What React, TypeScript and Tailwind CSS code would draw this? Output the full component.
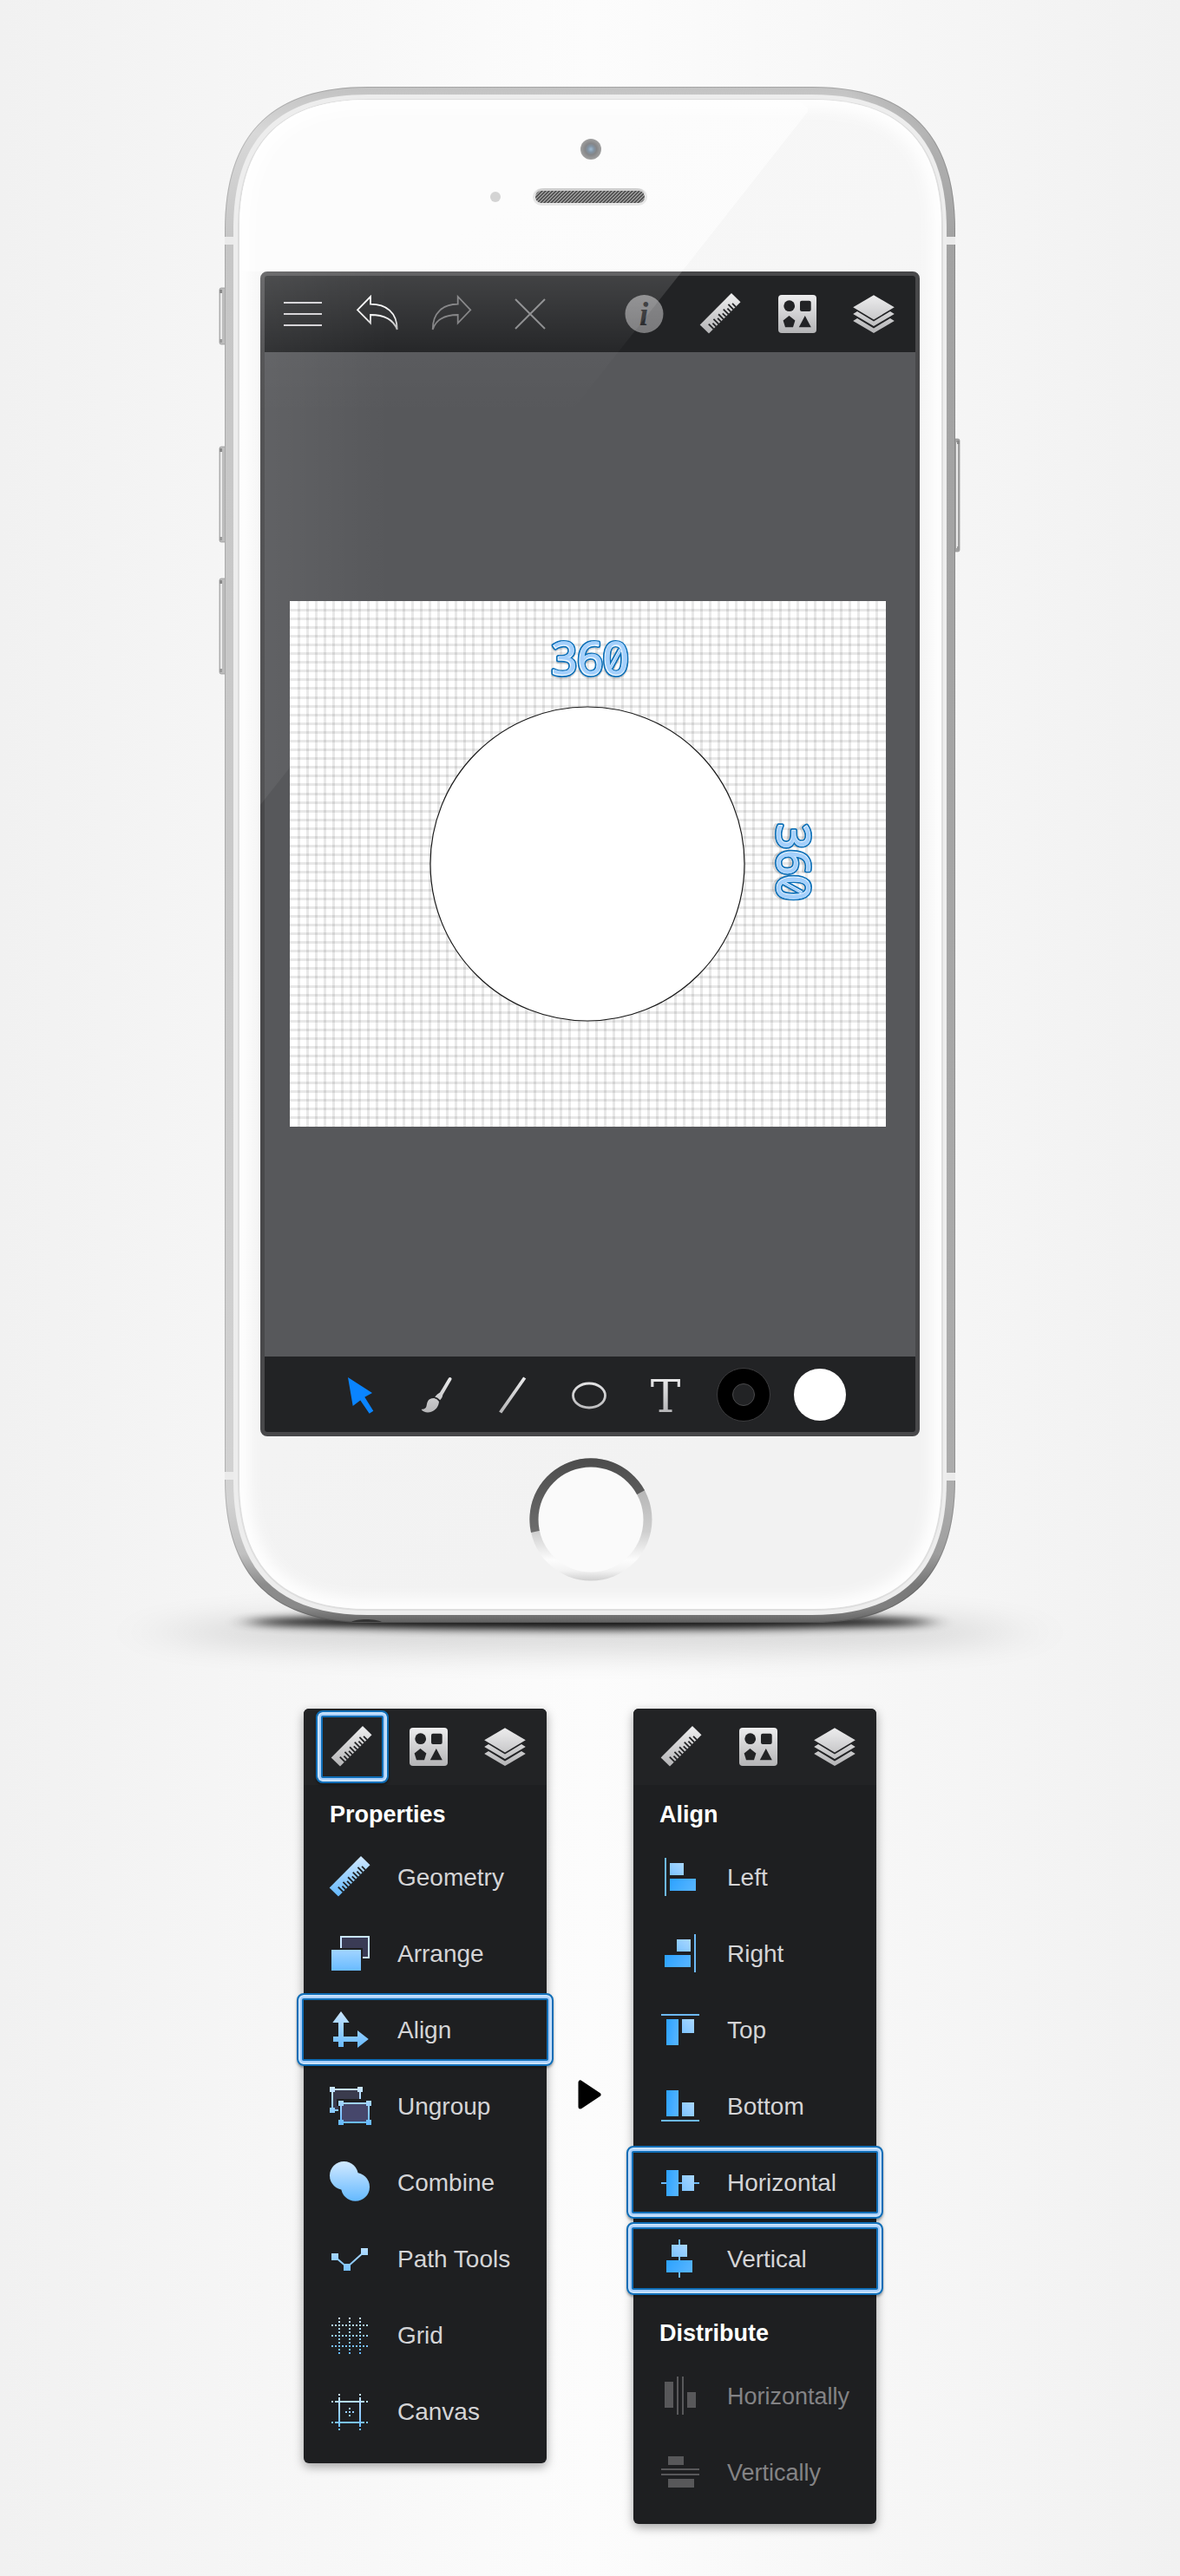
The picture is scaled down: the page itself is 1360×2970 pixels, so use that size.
import type { ReactNode } from "react";

const PHONE_W = 842;
const PHONE_H = 1771;

/* Outline of the handset: corners ease in longer than a circular arc. */
function shell(left: number, top: number, right: number, bottom: number, r: number) {
  const k = Math.round(r * 0.33);
  return [
    `M${left} ${top + r}`,
    `C${left} ${top + k} ${left + k} ${top} ${left + r} ${top}`,
    `H${right - r}`,
    `C${right - k} ${top} ${right} ${top + k} ${right} ${top + r}`,
    `V${bottom - r}`,
    `C${right} ${bottom - k} ${right - k} ${bottom} ${right - r} ${bottom}`,
    `H${left + r}`,
    `C${left + k} ${bottom} ${left} ${bottom - k} ${left} ${bottom - r}`,
    "Z",
  ].join(" ");
}

function SideKey({ x, y, height, flip = false }: { x: number; y: number; height: number; flip?: boolean }) {
  return (
    <g>
      <rect x={x} y={y} width="8" height={height} rx="2" fill={flip ? "#a2a2a2" : "#bdbdbd"} stroke="#909090" strokeWidth="0.7" />
      <rect x={flip ? x + 4 : x + 1} y={y + 4} width="2" height={height - 8} fill="#e9e9e9" />
      <rect x={flip ? x + 5 : x} y={y + 2} width="3" height="4" fill="#8a8a8a" />
      <rect x={flip ? x + 5 : x} y={y + height - 6} width="3" height="4" fill="#9a9a9a" />
    </g>
  );
}

function PhoneBody() {
  return (
    <svg
      className="pointer-events-none absolute inset-0 h-full w-full overflow-visible"
      viewBox={`0 0 ${PHONE_W} ${PHONE_H}`}
      aria-hidden="true"
    >
      <defs>
        <linearGradient id="rimV" x1="0" y1="0" x2="0" y2="1">
          <stop offset="0" stopColor="#c2c2c2" />
          <stop offset="0.03" stopColor="#d8d8d8" />
          <stop offset="0.1" stopColor="#c6c6c6" />
          <stop offset="0.5" stopColor="#c9c9c9" />
          <stop offset="0.92" stopColor="#d2d2d2" />
          <stop offset="0.955" stopColor="#c0c0c0" />
          <stop offset="0.975" stopColor="#8c8c8c" />
          <stop offset="0.99" stopColor="#8a8a8a" />
          <stop offset="1" stopColor="#606060" />
        </linearGradient>
        <linearGradient id="rimH" x1="0" y1="0" x2="1" y2="0">
          <stop offset="0.85" stopColor="#000" stopOpacity="0" />
          <stop offset="0.97" stopColor="#000" stopOpacity="0.18" />
          <stop offset="1" stopColor="#000" stopOpacity="0.18" />
        </linearGradient>
        <linearGradient id="face" x1="0" y1="0" x2="0.3" y2="1">
          <stop offset="0" stopColor="#f8f8f8" />
          <stop offset="1" stopColor="#f2f2f2" />
        </linearGradient>
        <radialGradient id="lens">
          <stop offset="0" stopColor="#9db9d0" />
          <stop offset="0.3" stopColor="#8293a3" />
          <stop offset="0.55" stopColor="#858688" />
          <stop offset="1" stopColor="#a0a0a0" />
        </radialGradient>
        <pattern id="mesh" width="4" height="4" patternUnits="userSpaceOnUse">
          <rect width="4" height="4" fill="#4c4c4c" />
          <path d="M-1 1L1 -1M0 4L4 0M3 5L5 3" stroke="#b4b4b4" strokeWidth="1.1" />
        </pattern>
        <filter id="softFace" x="-5%" y="-5%" width="110%" height="110%">
          <feGaussianBlur stdDeviation="8" />
        </filter>
        <filter id="shadowNear" x="-20%" y="-300%" width="140%" height="700%">
          <feGaussianBlur stdDeviation="14 5" />
        </filter>
        <filter id="shadowFar" x="-30%" y="-300%" width="160%" height="700%">
          <feGaussianBlur stdDeviation="44 16" />
        </filter>
        <clipPath id="faceClip">
          <path d={shell(17, 15, 826, 1755, 148)} />
        </clipPath>
      </defs>

      <ellipse cx="421" cy="1782" rx="490" ry="26" fill="#000" opacity="0.12" filter="url(#shadowFar)" />
      <ellipse cx="421" cy="1770" rx="396" ry="9" fill="#000" opacity="0.9" filter="url(#shadowNear)" />

      <SideKey x={-6} y={232} height={65} />
      <SideKey x={-6} y={415} height={110} />
      <SideKey x={-6} y={567} height={110} />
      <SideKey x={839} y={406} height={130} flip />

      <path d={shell(0, 0, PHONE_W, PHONE_H, 165)} fill="url(#rimV)" />
      <path d={shell(0, 0, PHONE_W, PHONE_H, 165)} fill="url(#rimH)" />
      <path d={shell(0.5, 0.5, PHONE_W - 0.5, PHONE_H - 0.5, 165)} fill="none" stroke="#000" strokeOpacity="0.15" />
      <rect x="0" y="173" width="10" height="9" fill="#ebebeb" />
      <rect x="832" y="173" width="10" height="9" fill="#ebebeb" />
      <rect x="0" y="1597" width="10" height="9" fill="#ebebeb" />
      <rect x="832" y="1598" width="10" height="9" fill="#ebebeb" />
      <path d="M146 1770C152 1766 173 1766 181 1770Z" fill="#333" />

      <path d={shell(10, 9, 832, 1762, 155)} fill="#ededed" />
      <path d={shell(15, 14, 828, 1757, 150)} fill="#dedede" />
      <path d={shell(17, 15, 826, 1755, 148)} fill="url(#face)" />
      <g clipPath="url(#faceClip)">
        <path d="M17 15H655Q676 22 671 30L527 213H17Z" fill="#fff" opacity="0.6" />
        <path d={shell(17, 15, 826, 1755, 148)} fill="none" stroke="#fff" strokeWidth="22" filter="url(#softFace)" />
      </g>

      <circle cx="422" cy="72" r="12" fill="url(#lens)" />
      <circle cx="312" cy="127" r="6" fill="#d4d4d4" />
      <rect x="355" y="117" width="132" height="20" rx="10" fill="#e6e6e6" />
      <path d="M358 123Q360 117 368 117H474Q482 117 484 123Z" fill="#cfcfcf" />
      <rect x="358" y="120" width="126" height="14" rx="7" fill="url(#mesh)" />
    </svg>
  );
}

/* Diagonal reflection that falls across the glass. */
function Glare() {
  return (
    <svg
      className="pointer-events-none absolute inset-0 h-full w-full"
      viewBox={`0 0 ${PHONE_W} ${PHONE_H}`}
      aria-hidden="true"
    >
      <defs>
        <linearGradient id="glareV" gradientUnits="userSpaceOnUse" x1="0" y1="213" x2="0" y2="380">
          <stop offset="0" stopColor="#fff" stopOpacity="0.15" />
          <stop offset="0.55" stopColor="#fff" stopOpacity="0.02" />
          <stop offset="1" stopColor="#fff" stopOpacity="0" />
        </linearGradient>
        <linearGradient id="glareH" gradientUnits="userSpaceOnUse" x1="41" y1="0" x2="190" y2="0">
          <stop offset="0" stopColor="#fff" stopOpacity="0.06" />
          <stop offset="1" stopColor="#fff" stopOpacity="0" />
        </linearGradient>
      </defs>
      <path d="M41 217Q41 213 45 213H527L41 828Z" fill="url(#glareV)" />
      <path d="M41 217Q41 213 45 213H527L41 828Z" fill="url(#glareH)" />
    </svg>
  );
}

function Icon({ children, className = "h-14 w-14" }: { children: ReactNode; className?: string }) {
  return (
    <svg viewBox="-28 -28 56 56" className={`overflow-visible ${className}`} aria-hidden="true">
      {children}
    </svg>
  );
}

/* Gradients shared by every icon on the page. */
function Paints() {
  return (
    <svg className="absolute h-0 w-0" aria-hidden="true">
      <defs>
        <linearGradient id="silver" gradientUnits="userSpaceOnUse" x1="0" y1="-22" x2="0" y2="22">
          <stop offset="0" stopColor="#ededee" />
          <stop offset="1" stopColor="#b4b4b6" />
        </linearGradient>
        <linearGradient id="grey" gradientUnits="userSpaceOnUse" x1="0" y1="-22" x2="0" y2="22">
          <stop offset="0" stopColor="#868688" />
          <stop offset="1" stopColor="#79797b" />
        </linearGradient>
        <linearGradient id="undoPaint" gradientUnits="userSpaceOnUse" x1="0" y1="-20" x2="0" y2="20">
          <stop offset="0" stopColor="#fff" />
          <stop offset="0.6" stopColor="#f0f0f0" />
          <stop offset="1" stopColor="#a8a8a8" />
        </linearGradient>
        <linearGradient id="sky" gradientUnits="userSpaceOnUse" x1="0" y1="-22" x2="0" y2="22">
          <stop offset="0" stopColor="#cde7ff" />
          <stop offset="1" stopColor="#64b9ff" />
        </linearGradient>
        <linearGradient id="pale" x1="0" y1="1" x2="1" y2="0">
          <stop offset="0" stopColor="#7cc3ff" />
          <stop offset="1" stopColor="#aad8ff" />
        </linearGradient>
        <linearGradient id="azure" x1="0" y1="0" x2="1" y2="0.3">
          <stop offset="0" stopColor="#2ba2ff" />
          <stop offset="1" stopColor="#53b3ff" />
        </linearGradient>
      </defs>
    </svg>
  );
}

const TICKS = [-19, -15, -11, -7, -3, 1, 5, 9, 13, 17];

function Ruler({ fill, hole = "#222325" }: { fill: string; hole?: string }) {
  return (
    <>
      <path d="M12 -24L22.5 -13.7L-14 22.5L-24.3 12.4Z" fill={fill} />
      <g transform="translate(-1 -0.8) rotate(-45)">
        {TICKS.map((t, i) => (
          <rect key={t} x={t} y={i % 2 === 0 ? -0.6 : 2} width="1.8" height={i % 2 === 0 ? 8.2 : 5.6} fill={hole} />
        ))}
      </g>
    </>
  );
}

function RulerIcon() {
  return (
    <Icon>
      <Ruler fill="url(#silver)" />
    </Icon>
  );
}

function ShapesIcon() {
  return (
    <Icon>
      <rect x="-22" y="-22" width="44" height="44" rx="4" fill="url(#silver)" />
      <circle cx="-9.3" cy="-9.3" r="6.4" fill="#222325" />
      <rect x="3" y="-15.3" width="12.7" height="12.3" rx="2" fill="#222325" />
      <path d="M-9.5 2L-2.6 7.4L-5 15.2H-14L-16.4 7.4Z" fill="#222325" />
      <path d="M8.8 2L15.8 15.2H1.8Z" fill="#222325" />
    </Icon>
  );
}

function LayersIcon() {
  return (
    <Icon>
      <g fill="url(#silver)">
        <path d="M0 -21.8L23.8 -7.7L0 6.4L-23.8 -7.7Z" />
        <path d="M-23.8 0L-19 -3L0 8.4L19 -3L23.8 0L0 14.1Z" />
        <path d="M-23.8 8L-19 5L0 16.4L19 5L23.8 8L0 22.1Z" />
      </g>
    </Icon>
  );
}

function ToolButton({ label, children }: { label: string; children: ReactNode }) {
  return (
    <button type="button" aria-label={label} className="flex h-full w-[88px] items-center justify-center">
      {children}
    </button>
  );
}

function TopBar() {
  return (
    <header className="flex h-[88px] justify-between bg-[#222325] pr-1">
      <div className="flex">
        <ToolButton label="Menu">
          <Icon>
            <path d="M-22 -13H22M-22 0H22M-22 13H22" stroke="#d2d0d4" strokeWidth="2" />
          </Icon>
        </ToolButton>
        <ToolButton label="Undo">
          <Icon>
            <path
              d="M-25 -4.7L-10 -20V-11.3C8 -11.3 20.7 -2 20.7 18C17 8 8 1 -10 1V10.5Z"
              fill="none"
              stroke="url(#undoPaint)"
              strokeWidth="1.8"
            />
          </Icon>
        </ToolButton>
        <ToolButton label="Redo">
          <Icon>
            <path
              d="M17.3 -4.7L2.7 -20V-11.3C-14 -11.3 -26.3 -2 -26.3 18C-23 8 -14 1 2.7 1V10.5Z"
              fill="none"
              stroke="#7c7c7e"
              strokeWidth="1.8"
            />
          </Icon>
        </ToolButton>
        <ToolButton label="Delete">
          <Icon>
            <path d="M-19 -17L15 17M15 -17L-19 17" stroke="#88888a" strokeWidth="2" />
          </Icon>
        </ToolButton>
      </div>
      <div className="flex">
        <ToolButton label="Info">
          <Icon>
            <circle cx="-0.5" r="22" fill="url(#grey)" />
            <text
              x="-1"
              y="13"
              textAnchor="middle"
              className="font-['Liberation_Serif',serif] text-[38px] font-bold italic"
              fill="#2c2d2f"
            >
              i
            </text>
          </Icon>
        </ToolButton>
        <ToolButton label="Properties">
          <RulerIcon />
        </ToolButton>
        <ToolButton label="Shapes">
          <ShapesIcon />
        </ToolButton>
        <ToolButton label="Layers">
          <LayersIcon />
        </ToolButton>
      </div>
    </header>
  );
}

function BottomBar() {
  return (
    <footer className="flex h-[87px] justify-center bg-[#222325] pl-0.5">
      <ToolButton label="Select">
        <Icon>
          <path d="M-16 -20L12 -2L3.3 2.8L13.3 18.8L8.7 21.8L-1.7 6.5L-10.3 13Z" fill="#0a84ff" />
        </Icon>
      </ToolButton>
      <ToolButton label="Brush">
        <Icon>
          <g fill="url(#silver)">
            <path d="M11.6 -18.6Q13.5 -21 15.4 -18.9Q15.8 -18 15.2 -17L5.4 0Q4.8 4 2.2 6.2Q-0.6 3 -3.8 2.4Q-1 -1 2 -2.4Z" />
            <path d="M-4.6 4C-13 4 -12.6 10 -13.6 13.6C-14.4 16.6 -17 16.8 -19.4 17C-17.4 20.6 -11.6 21 -8 19.8C-3 18.4 0.6 13.4 1 8Q-0.8 4.8 -4.6 4Z" />
          </g>
        </Icon>
      </ToolButton>
      <ToolButton label="Line">
        <Icon>
          <path d="M-16.3 20.5L11.7 -19.5" stroke="url(#silver)" strokeWidth="3.8" />
        </Icon>
      </ToolButton>
      <ToolButton label="Ellipse">
        <Icon>
          <ellipse cx="-2" cy="1" rx="18.5" ry="14" fill="none" stroke="url(#silver)" strokeWidth="2.8" />
        </Icon>
      </ToolButton>
      <ToolButton label="Text">
        <Icon>
          <text
            x="-2"
            y="20"
            textAnchor="middle"
            className="font-['DejaVu_Serif',serif] text-[52px]"
            fill="url(#silver)"
          >
            T
          </text>
        </Icon>
      </ToolButton>
      <ToolButton label="Stroke color">
        <span className="flex h-[62px] w-[62px] items-center justify-center rounded-full border border-[#3c3c3e] bg-black">
          <span className="h-[26px] w-[26px] rounded-full border border-[#4a4a4c] bg-[#222325]" />
        </span>
      </ToolButton>
      <ToolButton label="Fill color">
        <span className="h-[60px] w-[60px] rounded-full bg-white" />
      </ToolButton>
    </footer>
  );
}

/* One pass of the label: the digits plus the stroke through the zero. */
function Digits({ paint, width, y = 18.5, x = 0 }: { paint: string; width: number; x?: number; y?: number }) {
  return (
    <>
      <text x={x} y={y} fill={paint} stroke={paint} strokeWidth={width}>
        360
      </text>
      <path d={`M${23.5 + x} ${y - 7.5}L${35 + x} ${y - 28.5}`} stroke={paint} strokeWidth={width + 2} fill="none" />
    </>
  );
}

function Dimension({ transform }: { transform: string }) {
  return (
    <g
      transform={transform}
      textAnchor="middle"
      strokeLinejoin="round"
      className="font-['Open_Sans','Noto_Sans',sans-serif] text-[52px]"
    >
      <g opacity="0.14" aria-hidden="true">
        <Digits paint="#000" width={5} y={21} />
      </g>
      <Digits paint="#0b6fb8" width={5} />
      <g aria-hidden="true">
        <Digits paint="#eef7ff" width={1.6} />
        <Digits paint="#a5d0fb" width={0.4} x={0.5} y={18} />
      </g>
    </g>
  );
}

const gridLine = (i: number) => 9 + Math.floor(i * 10.09 + 0.15);

function Artboard() {
  return (
    <svg className="w-[687px] bg-white" viewBox="0 0 687 606" role="img" aria-label="Circle, 360 by 360">
      {Array.from({ length: 67 }, (_, i) => (
        <rect key={`v${i}`} x={gridLine(i)} y="0" width="3" height="606" fill="#000" fillOpacity="0.09" />
      ))}
      {Array.from({ length: 59 }, (_, i) => (
        <rect key={`h${i}`} x="0" y={gridLine(i)} width="687" height="3" fill="#000" fillOpacity="0.09" />
      ))}
      <circle cx="343" cy="303" r="181" fill="#fff" stroke="#1a1a1a" strokeWidth="1.2" />
      <Dimension transform="translate(346 66)" />
      <Dimension transform="translate(580 301) rotate(90)" />
    </svg>
  );
}

function HomeButton() {
  return (
    <button type="button" aria-label="Home" className="h-[142px] w-[142px] rounded-full">
      <svg viewBox="-71 -71 142 142" className="h-full w-full" aria-hidden="true">
        <defs>
          <linearGradient id="homeLow" x1="0" y1="0" x2="0" y2="1">
            <stop offset="0.2" stopColor="#b2b2b2" />
            <stop offset="0.6" stopColor="#cfcfcf" />
            <stop offset="0.83" stopColor="#fcfcfc" />
            <stop offset="0.92" stopColor="#f2f2f2" />
            <stop offset="1" stopColor="#cfcfcf" />
          </linearGradient>
          <linearGradient id="homeDark" gradientUnits="userSpaceOnUse" x1="0" y1="-70" x2="0" y2="20">
            <stop offset="0" stopColor="#4c4c4c" />
            <stop offset="1" stopColor="#6f6f6f" />
          </linearGradient>
        </defs>
        <circle r="70.5" fill="url(#homeLow)" />
        <path d="M-69 15A70.6 70.6 0 0 1 62 -33.8L0 0Z" fill="url(#homeDark)" />
        <circle r="60.5" fill="#fafafa" />
      </svg>
    </button>
  );
}

function Phone() {
  return (
    <section aria-label="Phone" className="relative flex w-[842px] flex-col items-center pt-[213px] pb-[48px]">
      <PhoneBody />
      <div className="relative w-[760px] overflow-hidden rounded-lg border-[5px] border-[#48484a] bg-[#57585b]">
        <TopBar />
        <main className="flex h-[1158px] items-center justify-center pt-[22px] pr-[5px]">
          <Artboard />
        </main>
        <BottomBar />
      </div>
      <div className="relative mt-[25px] flex pl-0.5">
        <HomeButton />
      </div>
      <Glare />
    </section>
  );
}

const FRAME =
  "rounded-lg border-2 border-[#0f6db6] shadow-[inset_0_0_0_2px_#c9e2fc,inset_0_0_0_4px_#a9cffb,inset_0_0_0_6px_#0f6db6,0_2px_3px_rgba(0,0,0,0.35)]";

function PanelTabs({ selected = false }: { selected?: boolean }) {
  return (
    <div className="flex h-[88px] rounded-t-md bg-[#222325] pl-3">
      <ToolButton label="Properties">
        <span className={`flex h-[84px] w-[84px] items-center justify-center ${selected ? FRAME : ""}`}>
          <RulerIcon />
        </span>
      </ToolButton>
      <ToolButton label="Shapes">
        <ShapesIcon />
      </ToolButton>
      <ToolButton label="Layers">
        <LayersIcon />
      </ToolButton>
    </div>
  );
}

function Panel({ children }: { children: ReactNode }) {
  return (
    <div className="w-[280px] rounded-md bg-[#1e1f21] pb-4 font-['Liberation_Sans',Arial,sans-serif] shadow-[0_4px_12px_rgba(0,0,0,0.35)]">
      {children}
    </div>
  );
}

function Heading({ children, className }: { children: ReactNode; className: string }) {
  return <h2 className={`px-[30px] pb-3 text-[27px] leading-8 font-bold text-white ${className}`}>{children}</h2>;
}

type Entry = { label: string; icon: ReactNode; framed?: boolean; disabled?: boolean };

function MenuList({ entries }: { entries: Entry[] }) {
  return (
    <ul>
      {entries.map(({ label, icon, framed, disabled }) => (
        <li key={label} className={framed ? "-mx-2 py-0.5" : ""}>
          <button
            type="button"
            disabled={disabled}
            className={`flex w-full items-center gap-[26px] text-left leading-8 whitespace-nowrap ${
              framed ? `h-[84px] px-8 ${FRAME}` : "h-[88px] px-[26px]"
            } ${disabled ? "text-[27px] text-[#838385]" : "text-[28px] text-[#d4d4d6]"}`}
          >
            <Icon className="h-14 w-14 shrink-0">{icon}</Icon>
            <span className="pt-0.5">{label}</span>
          </button>
        </li>
      ))}
    </ul>
  );
}

function Handles({ points, size }: { points: [number, number][]; size: number }) {
  return (
    <>
      {points.map(([x, y]) => (
        <rect key={`${x},${y}`} x={x - size / 2} y={y - size / 2} width={size} height={size} fill="url(#sky)" />
      ))}
    </>
  );
}

const PROPERTIES: Entry[] = [
  { label: "Geometry", icon: <Ruler fill="url(#sky)" hole="#1e1f21" /> },
  {
    label: "Arrange",
    icon: (
      <>
        <rect x="-11" y="-19" width="32" height="24" fill="#3a3b55" stroke="#c9e5ff" strokeWidth="2" />
        <rect x="-24" y="-6" width="38" height="28" fill="#1e1f21" />
        <rect x="-22" y="-4" width="34" height="24" fill="url(#sky)" />
      </>
    ),
  },
  {
    label: "Align",
    framed: true,
    icon: (
      <path
        d="M-11 -21L-1.3 -8H-8V8H8V1L20.8 11L8 21V14H-8V20H-14V14H-20V8H-14V-8H-20.7Z"
        fill="url(#sky)"
      />
    ),
  },
  {
    label: "Ungroup",
    icon: (
      <>
        <rect x="-21" y="-19" width="32" height="24" fill="#3a3b4d" stroke="url(#sky)" strokeWidth="2" />
        <path d="M-16 -8H26V24H-14V0H-16Z" fill="#1e1f21" />
        <rect x="-11" y="-3" width="32" height="22" fill="#46476b" stroke="url(#sky)" strokeWidth="2" />
        <Handles
          size={6}
          points={[
            [-21, -19],
            [11, -19],
            [-21, 5],
            [-11, -3],
            [21, -3],
            [-11, 19],
            [21, 19],
          ]}
        />
      </>
    ),
  },
  {
    label: "Combine",
    icon: (
      <g fill="url(#sky)">
        <circle cx="-7.6" cy="-7.7" r="16.4" />
        <circle cx="5.6" cy="5.4" r="16.4" />
      </g>
    ),
  },
  {
    label: "Path Tools",
    icon: (
      <>
        <path d="M-18 -2L-4 10L16 -8" fill="none" stroke="url(#sky)" strokeWidth="2" />
        <Handles
          size={8}
          points={[
            [-18, -2],
            [-4, 10],
            [16, -8],
          ]}
        />
      </>
    ),
  },
  {
    label: "Grid",
    icon: (
      <path
        d="M-13 -20V22M-1 -20V22M11 -20V22M-22 -11H20M-22 1H20M-22 13H20"
        stroke="url(#sky)"
        strokeWidth="2"
        strokeDasharray="2 2"
        fill="none"
      />
    ),
  },
  {
    label: "Canvas",
    icon: (
      <g stroke="url(#sky)" strokeWidth="2" fill="none">
        <path d="M-13 -20V22M11 -20V22M-22 -11H20M-22 13H20" strokeDasharray="2 2" />
        <path d="M-13 -16V18M11 -16V18M-18 -11H16M-18 13H16" />
        <path d="M-6 1H4M-1 -4V6" strokeDasharray="2 2" />
      </g>
    ),
  },
];

const line = (x: number, y: number, width: number, height: number) => (
  <rect x={x} y={y} width={width} height={height} fill="#6db9f5" />
);
const big = (x: number, y: number, width: number, height: number) => (
  <rect x={x} y={y} width={width} height={height} fill="url(#azure)" />
);
const small = (x: number, y: number, width: number, height: number) => (
  <rect x={x} y={y} width={width} height={height} fill="url(#pale)" />
);

const ALIGN: Entry[] = [
  { label: "Left", icon: <>{line(-18, -22, 2, 44)}{small(-12, -16, 16, 14)}{big(-12, 2, 30, 14)}</> },
  { label: "Right", icon: <>{line(16, -22, 2, 44)}{small(-4, -16, 16, 14)}{big(-18, 2, 30, 14)}</> },
  { label: "Top", icon: <>{line(-22, -18, 44, 2)}{big(-16, -12, 14, 30)}{small(2, -12, 14, 16)}</> },
  { label: "Bottom", icon: <>{line(-22, 16, 44, 2)}{big(-16, -18, 14, 30)}{small(2, -4, 14, 16)}</> },
  {
    label: "Horizontal",
    framed: true,
    icon: <>{line(-22, 0, 44, 2)}{big(-16, -14, 14, 30)}{small(2, -8, 14, 18)}</>,
  },
  {
    label: "Vertical",
    framed: true,
    icon: <>{line(-2, -22, 2, 44)}{small(-10, -16, 18, 14)}{big(-16, 2, 30, 14)}</>,
  },
];

const DISTRIBUTE: Entry[] = [
  {
    label: "Horizontally",
    disabled: true,
    icon: <path d="M-18 -16h10v30h-10zM-4 -22h2v44h-2zM2 -22h2v44h-2zM8 -4h10v18h-10z" fill="#58585a" />,
  },
  {
    label: "Vertically",
    disabled: true,
    icon: <path d="M-14 -18h18v10h-18zM-22 -4h44v2h-44zM-22 2h44v2h-44zM-14 8h30v10h-30z" fill="#58585a" />,
  },
];

export default function App() {
  return (
    <div className="flex flex-col items-center bg-[linear-gradient(90deg,#f1f1f1_0%,#f5f5f5_18%,#fcfcfc_50%,#f5f5f5_82%,#f1f1f1_100%)] pt-[100px] pb-[60px]">
      <Paints />
      <Phone />
      <section className="relative mt-[99px] flex items-start" aria-label="Menus">
        <Panel>
          <PanelTabs selected />
          <Heading className="pt-[18px]">Properties</Heading>
          <MenuList entries={PROPERTIES} />
        </Panel>
        <div className="mt-[428px] flex w-[100px] justify-center">
          <svg viewBox="0 0 28 34" className="h-[34px] w-7" aria-hidden="true">
            <path d="M3 3V31L24 17Z" fill="#000" stroke="#000" strokeWidth="5" strokeLinejoin="round" />
          </svg>
        </div>
        <Panel>
          <PanelTabs />
          <Heading className="pt-[18px]">Align</Heading>
          <MenuList entries={ALIGN} />
          <Heading className="pt-[26px]">Distribute</Heading>
          <MenuList entries={DISTRIBUTE} />
        </Panel>
      </section>
    </div>
  );
}
